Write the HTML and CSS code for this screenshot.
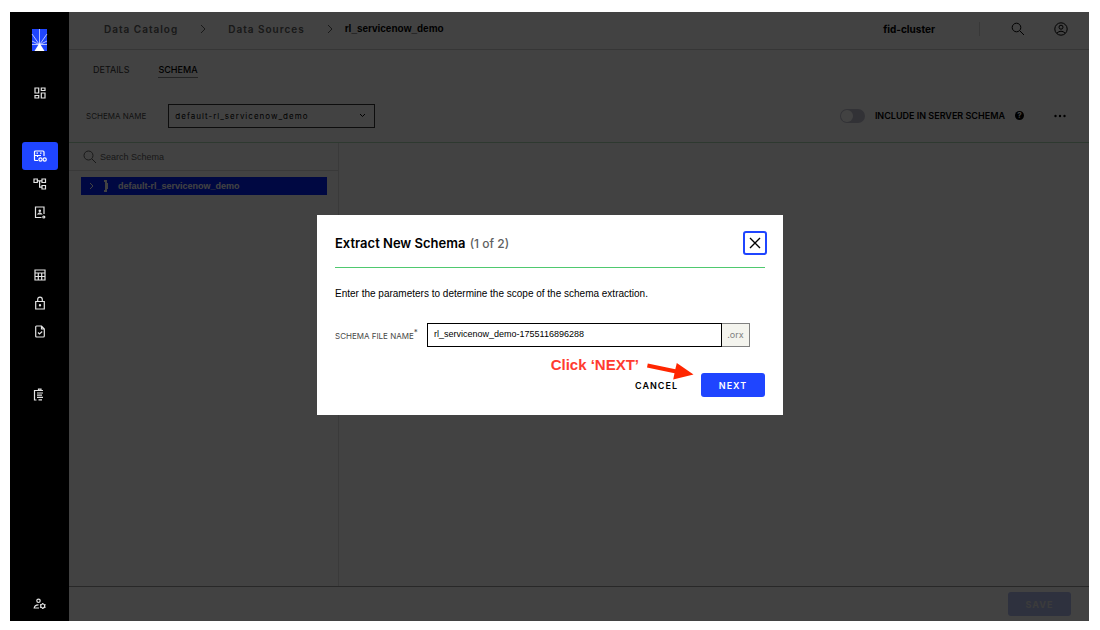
FILE: index.html
```html
<!DOCTYPE html>
<html lang="en">
<head>
    <meta charset="utf-8">
    <title>Data Catalog - rl_servicenow_demo</title>
    <link rel="stylesheet" href="styles.css">
</head>
<body>
    <div class="app">
        <nav class="sidebar">
            <a href="#" class="logo" aria-label="Home">
                <svg width="15" height="22" viewBox="0 0 15 22">
                    <rect width="15" height="22" fill="#1f45ff"/>
                    <path d="M7.500 0V15M0 5L7 15M15 5L8 15M0 12L7 15.500M15 12L8 15.500M0 15.500H15" stroke="#c3ceff" stroke-width=".9" fill="none"/>
                    <path d="M7.500 14L12.500 22H2.500Z" fill="#fff"/>
                </svg>
            </a>
            <div class="nav-group">
                <a href="#" class="nav-item" aria-label="Dashboard">
                    <svg width="12" height="12" viewBox="0 0 12 12"><path d="M1 1h3.700v5H1zM7.300 1H11v2.500H7.300zM1 8.500h3.700V11H1zM7.300 6H11v5H7.300z"/></svg>
                </a>
            </div>
            <div class="nav-group">
                <a href="#" class="nav-item active" aria-label="Data catalog">
                    <svg width="14" height="12" viewBox="0 0 14 12"><path d="M5 10.500H2.500Q1.500 10.500 1.500 9.500V2Q1.500 1 2.500 1H10Q11 1 11 2V6M1.500 5.500H8M3.500 3.200h1.500M7 3.200h1.500M4.500 5.500v1.500"/><circle cx="7.500" cy="9.500" r="1.600"/><circle cx="11.700" cy="9.500" r="1.600"/></svg>
                </a>
                <a href="#" class="nav-item" aria-label="Namespace">
                    <svg width="14" height="12" viewBox="0 0 14 12"><path d="M1 1h3.300v3.500H1zM9 1h3.500v3.500H9zM9 7.500h3.500V11H9zM4.300 2.800H9M6.600 2.800V9.200H9"/></svg>
                </a>
                <a href="#" class="nav-item" aria-label="Directory browser">
                    <svg width="12" height="13" viewBox="0 0 12 13"><path d="M7.500 11.500H1.500V1H10V8"/><circle cx="5.800" cy="4.800" r=".7"/><path d="M4 8Q5.800 5.500 7.600 8Z"/><circle cx="9.800" cy="11" r="1"/></svg>
                </a>
            </div>
            <div class="nav-group">
                <a href="#" class="nav-item" aria-label="Tables">
                    <svg width="12" height="12" viewBox="0 0 12 12"><path d="M1 1H11V11H1zM1 4H11M1 7.500H11M4.300 4V11M7.700 4V11"/></svg>
                </a>
                <a href="#" class="nav-item" aria-label="Security">
                    <svg width="12" height="14" viewBox="0 0 12 14"><path d="M1.700 5.500H10.300V13H1.700zM3.700 5.500V3.500Q3.700 1.200 6 1.200T8.300 3.500V5.500"/><circle cx="6" cy="9.200" r=".6"/></svg>
                </a>
                <a href="#" class="nav-item" aria-label="Reports">
                    <svg width="12" height="13" viewBox="0 0 12 13"><path d="M2.500 1H7.500L10.300 4V11Q10.300 12 9.300 12H2.700Q1.700 12 1.700 11V2Q1.700 1 2.500 1zM7.500 1V4H10.300M4 7.500L5.500 9L8.200 6.500"/></svg>
                </a>
            </div>
            <div class="nav-group">
                <a href="#" class="nav-item" aria-label="Tasks">
                    <svg width="14" height="13" viewBox="0 0 14 13"><path d="M3.500 12H1.500V2.500H4M4 2.500H10M5.500 2.500V1.200H8V2.500M4 5H10M4 7.200H9M4 9.400H10M5.500 11.800H9"/></svg>
                </a>
            </div>
            <div class="nav-group nav-bottom">
                <a href="#" class="nav-item" aria-label="User settings">
                    <svg width="14" height="12" viewBox="0 0 14 12"><circle cx="5.500" cy="2.800" r="1.700"/><path d="M6 10H1.200Q1.500 7 5.500 6.800"/><circle cx="9.700" cy="8" r="2"/><path d="M9.700 5V6M9.700 10V11M7 6.500L8 7M11.500 9L12.500 9.500M7 9.500L8 9M11.500 7L12.500 6.500"/></svg>
                </a>
            </div>
        </nav>

        <main class="content">
            <header class="topbar">
                <div class="breadcrumb">
                    <a href="#">Data Catalog</a>
                    <svg width="6" height="10" viewBox="0 0 6 10"><path d="M1 1L5 5L1 9"/></svg>
                    <a href="#">Data Sources</a>
                    <svg width="6" height="10" viewBox="0 0 6 10"><path d="M1 1L5 5L1 9"/></svg>
                </div>
                <h1>rl_servicenow_demo</h1>
                <span class="cluster">fid-cluster</span>
                <button type="button" class="icon-button search-button" aria-label="Search">
                    <svg width="14" height="14" viewBox="0 0 14 14"><circle cx="5.500" cy="5.500" r="4.300"/><path d="M8.800 8.800L13 13"/></svg>
                </button>
                <button type="button" class="icon-button" aria-label="Account">
                    <svg width="14" height="14" viewBox="0 0 14 14"><circle cx="7" cy="7" r="6.200"/><circle cx="7" cy="5.200" r="2"/><path d="M2.800 11.200Q7 7.200 11.200 11.200"/></svg>
                </button>
            </header>

            <div class="tabs">
                <a href="#" class="tab">DETAILS</a>
                <a href="#" class="tab selected">SCHEMA</a>
            </div>

            <div class="toolbar">
                <label for="schema-name">SCHEMA NAME</label>
                <div class="select-box">
                    <select id="schema-name">
                        <option>default-rl_servicenow_demo</option>
                    </select>
                    <svg width="7" height="5" viewBox="0 0 7 5"><path d="M1 1L3.500 3.500L6 1"/></svg>
                </div>
                <input type="checkbox" id="include" class="toggle">
                <label for="include" class="include-label">INCLUDE IN SERVER SCHEMA</label>
                <span class="help">?</span>
                <button type="button" class="icon-button more" aria-label="More">
                    <svg width="12" height="4" viewBox="0 0 12 4"><circle cx="1.500" cy="2" r="1.200"/><circle cx="6" cy="2" r="1.200"/><circle cx="10.500" cy="2" r="1.200"/></svg>
                </button>
            </div>

            <div class="workspace">
                <section class="tree-panel">
                    <div class="tree-search">
                        <svg width="14" height="14" viewBox="0 0 14 14"><circle cx="5.500" cy="5.500" r="4.500"/><path d="M8.800 8.800L13 13"/></svg>
                        <input type="text" placeholder="Search Schema" aria-label="Search Schema">
                    </div>
                    <div class="tree-row">
                        <svg width="5" height="8" viewBox="0 0 5 8"><path d="M1 1L4 4L1 7"/></svg>
                        <svg class="schema-icon" width="5" height="12" viewBox="0 0 5 12"><path d="M0 1H2V11H0M2 4H3V8H2"/></svg>
                        <span>default-rl_servicenow_demo</span>
                    </div>
                </section>
            </div>

            <footer class="footer">
                <button type="button" class="save" disabled>SAVE</button>
            </footer>
            <div class="backdrop"></div>
        </main>
    </div>

    <div class="modal-layer">
        <div class="modal" role="dialog" aria-labelledby="modal-title">
            <div class="modal-header">
                <h2 id="modal-title">Extract New Schema <span>(1 of 2)</span></h2>
                <button type="button" class="close" aria-label="Close">
                    <svg width="12" height="12" viewBox="0 0 12 12"><path d="M1 1L11 11M11 1L1 11"/></svg>
                </button>
            </div>
            <p>Enter the parameters to determine the scope of the schema extraction.</p>
            <div class="field">
                <label for="file-name">SCHEMA FILE NAME<sup>*</sup></label>
                <input type="text" id="file-name" value="rl_servicenow_demo-1755116896288">
                <span class="suffix">.orx</span>
            </div>
            <div class="actions">
                <button type="button" class="cancel">CANCEL</button>
                <button type="button" class="next">NEXT</button>
            </div>
            <div class="callout">
                <span>Click ‘NEXT’</span>
                <svg width="48" height="20" viewBox="0 0 48 20"><path d="M1 3.500L1.800 -.5L29.300 5.200L30.800 -1L47.500 10.500L27.200 15.500L28.500 9.200Z" fill="#ff2600"/></svg>
            </div>
        </div>
    </div>
</body>
</html>
```

FILE: styles.css
```css
* {
    box-sizing: border-box;
}

body {
    margin: 0;
    height: 100vh;
    padding: 12px 11px 9px 10px;
    background: #fff;
    font-family: Inter, "Liberation Sans", sans-serif;
    font-size: 10px;
    color: #000;
}

a {
    color: inherit;
    text-decoration: none;
}

button {
    font: inherit;
    border: 0;
    padding: 0;
    background: none;
    color: inherit;
    cursor: pointer;
}

svg {
    display: block;
    flex: none;
    overflow: visible;
    fill: none;
    stroke: currentColor;
}

.app {
    display: flex;
    height: 100%;
}

/* sidebar */
.sidebar {
    width: 59px;
    flex: none;
    display: flex;
    flex-direction: column;
    align-items: center;
    gap: 35px;
    padding: 17px 0 3px;
    background: #000;
    color: #e4e4e4;
}

.logo {
    margin-bottom: -7px;
}

.logo svg {
    stroke: none;
}

.nav-item {
    display: flex;
    align-items: center;
    justify-content: center;
    width: 36px;
    height: 28px;
    border-radius: 3px;
}

.nav-item svg {
    stroke-width: 1.2;
}

.nav-item.active {
    background: #1f45ff;
    color: #fff;
}

.nav-bottom {
    margin-top: auto;
}

/* page behind the dialog */
.content {
    position: relative;
    flex: 1;
    min-width: 0;
    display: flex;
    flex-direction: column;
    background: #fff;
}

.backdrop {
    position: absolute;
    inset: 0;
    background: rgba(0, 0, 0, 0.74);
}

.topbar {
    display: flex;
    align-items: center;
    height: 38px;
    padding: 0 21px 4px 35px;
    border-bottom: 1px solid #d0d0d0;
}

.breadcrumb {
    display: flex;
    align-items: center;
    gap: 22px;
    margin-right: 12px;
    font-size: 10px;
    font-weight: 600;
    letter-spacing: 1px;
    color: #606060;
}

h1 {
    margin: 0;
    font: bold 10px "Liberation Sans", sans-serif;
}

.cluster {
    margin-left: auto;
    font-size: 10px;
    font-weight: 700;
}

.search-button {
    margin-right: 29px;
    padding-left: 31px;
    border-left: 1px solid #d8d8d8;
}

.cluster + .search-button {
    margin-left: 44px;
}

.tabs {
    display: flex;
    gap: 29px;
    padding: 14px 24px 0;
    font-size: 9px;
    line-height: 12px;
}

.tab {
    padding-bottom: 1px;
    color: #333;
}

.tab.selected {
    color: #000;
    font-weight: 500;
    border-bottom: 1px solid #888;
}

.toolbar {
    display: flex;
    align-items: center;
    height: 65px;
    padding: 11px 23px 0 17px;
    font-size: 8px;
    color: #484848;
    border-bottom: 1px solid #b0dcb8;
}

.select-box {
    position: relative;
    width: 207px;
    margin-left: 22px;
    color: #000;
}

.select-box select {
    appearance: none;
    width: 100%;
    height: 24px;
    padding: 0 20px 0 6px;
    border: 1px solid #333;
    border-radius: 0;
    background: #fff;
    font: 8px Inter, sans-serif;
    letter-spacing: 1px;
    color: #000;
}

.select-box svg {
    position: absolute;
    right: 9px;
    top: 9px;
    pointer-events: none;
}

.toggle {
    appearance: none;
    width: 25px;
    height: 14px;
    margin: 0 10px 0 auto;
    padding: 1px;
    border-radius: 7px;
    background: #c0c0d0;
}

.toggle::before {
    content: "";
    display: block;
    width: 12px;
    height: 12px;
    border-radius: 50%;
    background: #fff;
}

.include-label {
    font-size: 9px;
    font-weight: 600;
    color: #000;
}

.help {
    width: 9px;
    height: 9px;
    margin: 0 30px 0 10px;
    border-radius: 50%;
    background: #000;
    color: #fff;
    font-size: 8px;
    font-weight: 700;
    line-height: 9px;
    text-align: center;
}

.more svg {
    fill: #000;
    stroke: none;
}

.workspace {
    flex: 1;
    display: flex;
    min-height: 0;
}

.tree-panel {
    width: 270px;
    border-right: 1px solid #e0e0e0;
}

.tree-search {
    display: flex;
    align-items: center;
    gap: 3px;
    height: 28px;
    padding: 0 14px;
    border-bottom: 1px solid #dcdcdc;
    color: #606060;
}

.tree-search input {
    flex: 1;
    min-width: 0;
    border: 0;
    padding: 0;
    background: none;
    font: 9px "Liberation Sans", sans-serif;
}

.tree-search input::placeholder {
    color: #606060;
}

.tree-row {
    display: flex;
    align-items: center;
    height: 18px;
    margin: 6px 11px 0 12px;
    padding-left: 8px;
    background: #0020ff;
    color: #fff;
    font: bold 9px "Liberation Sans", sans-serif;
}

.schema-icon {
    margin: 0 9px 0 10px;
    stroke-width: 2;
}

.footer {
    display: flex;
    align-items: center;
    justify-content: flex-end;
    height: 35px;
    padding: 0 18px;
    border-top: 1px solid #999;
}

.save {
    width: 63px;
    height: 24px;
    border-radius: 3px;
    background: #b0bcf0;
    color: #e4e4e4;
    font-size: 9px;
    font-weight: 700;
    letter-spacing: 1px;
}

/* dialog */
.modal-layer {
    position: fixed;
    inset: 0;
    display: flex;
    align-items: center;
    justify-content: center;
}

.modal {
    position: relative;
    width: 466px;
    padding: 16px 18px 18px;
    background: #fff;
}

.modal-header {
    display: flex;
    align-items: center;
    justify-content: space-between;
    padding-bottom: 12px;
    border-bottom: 1px solid #4fc96f;
}

h2 {
    margin: 0;
    font-size: 13px;
    font-weight: 600;
}

h2 span {
    margin-left: 1px;
    font-size: 12px;
    font-weight: 500;
    color: #606060;
}

.close {
    display: flex;
    align-items: center;
    justify-content: center;
    width: 24px;
    height: 24px;
    margin-right: -2px;
    border: 2px solid #1f45ff;
    border-radius: 3px;
}

.close svg {
    stroke-width: 1.4;
}

.modal p {
    margin: 18px 0 21px;
    font: 10px/16px "Liberation Sans", sans-serif;
}

.field {
    display: flex;
    align-items: center;
    padding-right: 15px;
}

.field label {
    width: 92px;
    padding-top: 2px;
    font-size: 8px;
    color: #484848;
}

.field sup {
    font-size: 8px;
    line-height: 0;
}

.field input {
    flex: 1;
    min-width: 0;
    height: 24px;
    padding: 0 6px 2px;
    border: 1px solid #000;
    border-radius: 0;
    font: 9px "Liberation Sans", sans-serif;
    color: #000;
}

.suffix {
    width: 28px;
    height: 24px;
    border: 1px solid #808080;
    border-left: 0;
    background: #f4f4ee;
    color: #808080;
    font-size: 9px;
    line-height: 22px;
    text-align: center;
}

.actions {
    display: flex;
    justify-content: flex-end;
    gap: 23px;
    margin-top: 26px;
    font-size: 9px;
    font-weight: 600;
}

.actions button {
    height: 24px;
    letter-spacing: 1px;
}

.next {
    width: 64px;
    border-radius: 3px;
    background: #1f45ff;
    color: #fff;
}

/* red note pointing at the NEXT button */
.callout {
    position: absolute;
    right: 89px;
    top: 141px;
    display: flex;
    align-items: flex-start;
    gap: 7px;
    color: #ff3b30;
    font: bold 15px/18px "Liberation Sans", sans-serif;
}

.callout svg {
    margin-top: 8px;
    stroke: none;
}
```
